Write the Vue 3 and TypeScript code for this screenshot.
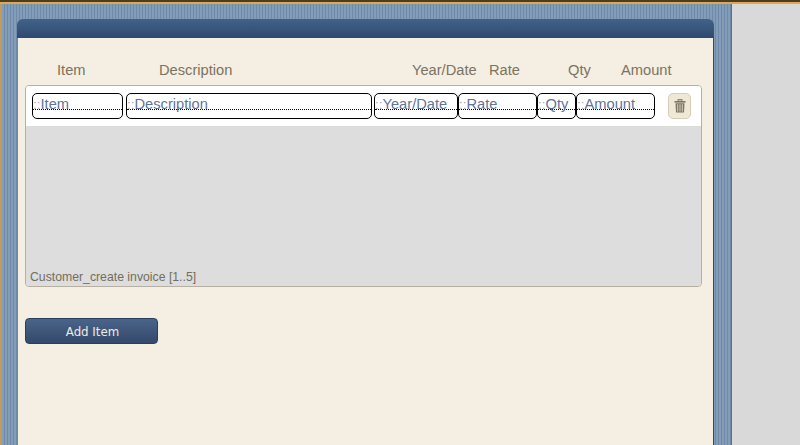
<script setup lang="ts">
interface Col { label: string; cls: string }
const headers: Col[] = [
  { label: 'Item', cls: 'h-item' },
  { label: 'Description', cls: 'h-desc' },
  { label: 'Year/Date', cls: 'h-year' },
  { label: 'Rate', cls: 'h-rate' },
  { label: 'Qty', cls: 'h-qty' },
  { label: 'Amount', cls: 'h-amount' }
]
const fields: Col[] = [
  { label: 'Item', cls: 'f-item' },
  { label: 'Description', cls: 'f-desc' },
  { label: 'Year/Date', cls: 'f-year' },
  { label: 'Rate', cls: 'f-rate' },
  { label: 'Qty', cls: 'f-qty' },
  { label: 'Amount', cls: 'f-amount' }
]
</script>

<template>
  <div class="page">
    <div class="topline"></div>
    <div class="main">
      <div class="stripes">
        <section class="panel">
          <header class="panel-head"></header>
          <div class="panel-body">
            <div class="head-row">
              <span v-for="h in headers" :key="h.label" :class="['hcell', h.cls]">{{ h.label }}</span>
            </div>
            <div class="list">
              <div class="row">
                <div v-for="f in fields" :key="f.label" :class="['field', f.cls]">
                  <span class="field-text"><span class="colons">::</span>{{ f.label }}</span>
                </div>
                <button class="trash" type="button" aria-label="Delete">
                  <svg width="12" height="14" viewBox="0 0 12 14">
                    <rect x="4" y="0.5" width="4" height="1.5" fill="none" stroke="#7d7563" stroke-width="0.8"/>
                    <rect x="0.5" y="2" width="11" height="1.6" fill="#7d7563"/>
                    <path d="M1.5 4.2h9l-.5 9.3H2z" fill="#7d7563"/>
                    <path d="M3.7 5.2v7.4M6 5.2v7.4M8.3 5.2v7.4" stroke="#d8d1bd" stroke-width="1"/>
                  </svg>
                </button>
              </div>
              <div class="list-area">
                <span class="list-foot">Customer_create invoice [1..5]</span>
              </div>
            </div>
            <button class="add" type="button">Add Item</button>
          </div>
        </section>
      </div>
      <div class="side"></div>
    </div>
  </div>
</template>

<style>
html, body { margin: 0; padding: 0; overflow: hidden; }
</style>

<style scoped>
.page {
  width: 800px;
  height: 445px;
  overflow: hidden;
  display: flex;
  flex-direction: column;
  font-family: "Liberation Sans", Arial, sans-serif;
}
.topline {
  height: 4px;
  flex: none;
  background: linear-gradient(#4a3d26 0, #4a3d26 2px, #e0a850 2px, #e0a850 4px);
}
.main { flex: 1; display: flex; min-height: 0; }
.stripes {
  width: 732px;
  flex: none;
  box-sizing: border-box;
  padding: 15px 17px 0 15px;
  border-left: 2px solid #c49a5c;
  border-right: 1px solid #5f7085;
  background: repeating-linear-gradient(90deg, #839cb8 0, #839cb8 2px, #6f8aa8 2px, #6f8aa8 3px);
}
.side { flex: 1; background: #d9d9d9; }
.panel { height: 100%; display: flex; flex-direction: column; }
.panel-head {
  height: 19px;
  flex: none;
  border-radius: 6px 6px 0 0;
  background: linear-gradient(#42628a, #2f4a6d);
}
.panel-body {
  flex: 1;
  background: #f5eee3;
  padding: 0 12px 0 7px;
  border-left: 1px solid #6f8aa8;
  border-right: 1px solid #2f4a6d;
}
.head-row {
  height: 47px;
  box-sizing: border-box;
  padding-top: 24px;
  display: flex;
  font-size: 14.67px;
  line-height: 16px;
  color: #7b7360;
}
.hcell { white-space: nowrap; }
.h-item { margin-left: 32px; width: 102px; }
.h-desc { width: 253px; }
.h-year { width: 77px; }
.h-rate { width: 79px; }
.h-qty { width: 53px; }
.h-amount { width: 60px; }
.list {
  width: 677px;
  height: 202px;
  box-sizing: border-box;
  border: 1px solid #b5b0a2;
  border-radius: 4px;
  overflow: hidden;
  display: flex;
  flex-direction: column;
}
.row {
  height: 40px;
  flex: none;
  box-sizing: border-box;
  background: #fff;
  padding: 7px 0 0 6px;
  display: flex;
}
.field {
  box-sizing: border-box;
  height: 26px;
  border: 1px solid #000;
  border-radius: 5px;
  font-size: 14.67px;
  line-height: 18px;
  color: #5f7499;
  overflow: hidden;
  flex: none;
}
.field-text {
  display: block;
  height: 14px;
  margin-top: 1px;
  border-bottom: 1px dotted #000;
  white-space: nowrap;
}
.colons { color: #9aa7bd; font-size: 13.5px; }
.f-item { width: 91px; margin-right: 3px; }
.f-desc { width: 246px; margin-right: 2px; }
.f-year { width: 84px; }
.f-rate { width: 79px; }
.f-qty { width: 39px; }
.f-amount { width: 79px; }
.trash {
  width: 23px;
  height: 26px;
  margin-left: 13px;
  padding: 0;
  flex: none;
  box-sizing: border-box;
  display: flex;
  align-items: center;
  justify-content: center;
  background: #efe8d6;
  border: 1px solid #d5cdb6;
  border-radius: 5px;
}
.list-area {
  flex: 1;
  background: #dddddd;
  display: flex;
  align-items: flex-end;
  padding: 0 0 2px 4px;
}
.list-foot { font-size: 12.25px; line-height: 14px; color: #736d5c; }
.add {
  display: block;
  width: 133px;
  height: 26px;
  margin-top: 31px;
  padding: 1px 0 0 2px;
  border: 1px solid #2b3f5c;
  border-radius: 4px;
  background: linear-gradient(#4a6489, #34496b);
  color: #f0ebe0;
  font-family: "DejaVu Sans", Verdana, sans-serif;
  font-size: 11.8px;
}
</style>
